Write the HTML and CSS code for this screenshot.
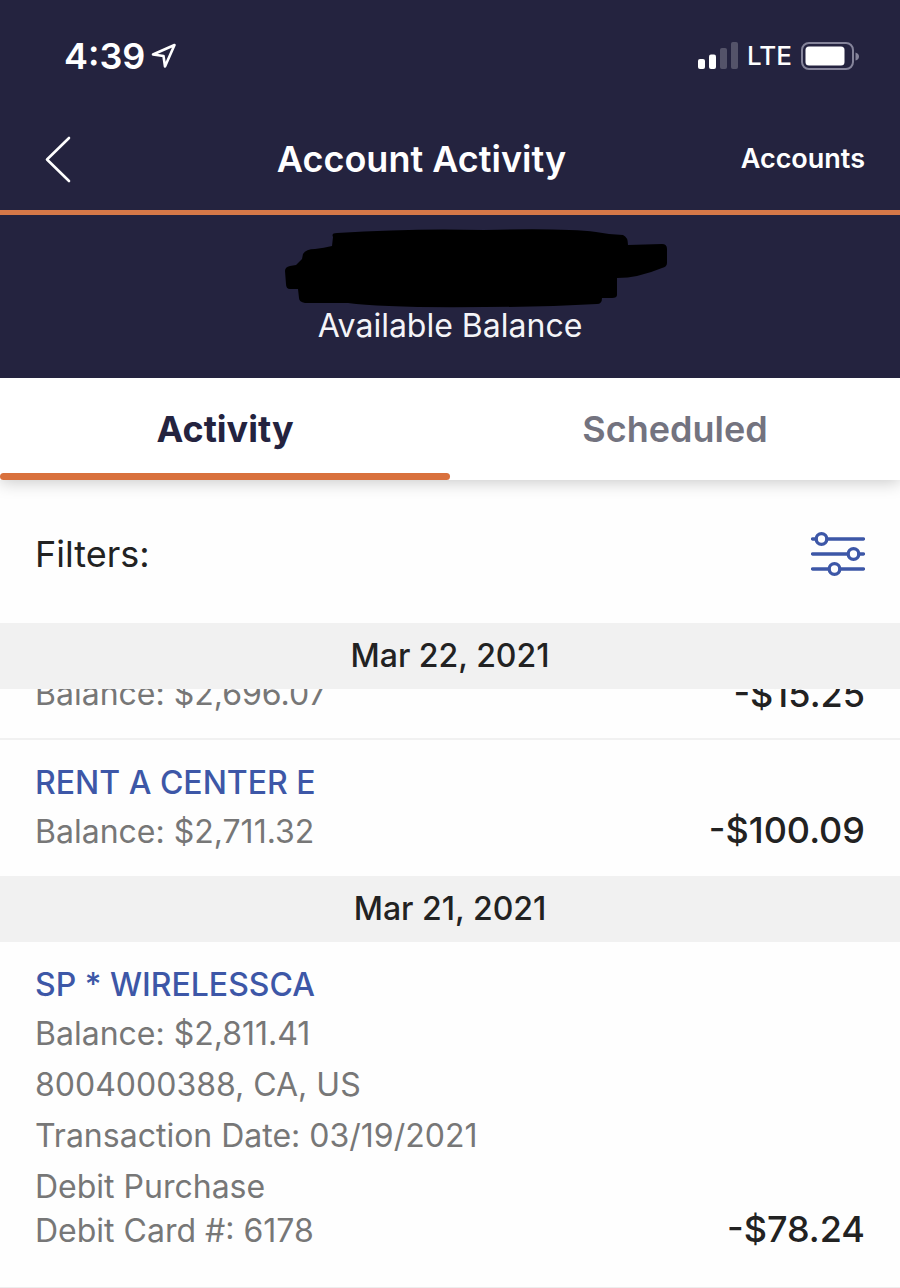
FILE: index.html
```html
<!DOCTYPE html>
<html lang="en">
<head>
<meta charset="utf-8">
<meta name="viewport" content="width=device-width, initial-scale=1">
<title>Account Activity</title>
<link rel="stylesheet" href="styles.css">
</head>
<body>
<header class="top">
  <div class="status">
    <div class="status-left">
      <span class="time">4:39</span>
      <svg width="26" height="26" viewBox="0 0 26 26" aria-hidden="true"><path d="M2 11.500 23.500 2 14 23.500 12.500 13z" fill="none" stroke="#fff" stroke-width="2.600" stroke-linejoin="round"/></svg>
    </div>
    <div class="status-right">
      <svg width="40" height="28" viewBox="0 0 40 28" aria-hidden="true"><g fill="#fff"><rect x="0" y="17" width="7" height="10" rx="2"/><rect x="11" y="12.500" width="7" height="14.500" rx="2"/><g opacity=".22"><rect x="22" y="6" width="7" height="21" rx="2"/><rect x="33" y="0" width="7" height="27" rx="2"/></g></g></svg>
      <span class="network">LTE</span>
      <svg width="58" height="28" viewBox="0 0 58 28" aria-hidden="true"><rect x="1" y="1" width="51" height="26" rx="7" fill="none" stroke="#85849a" stroke-width="2"/><rect x="4.500" y="4.500" width="39" height="19" rx="3.500" fill="#fff"/><path d="M54.500 10.500q3.500 1 3.500 4t-3.500 4z" fill="#85849a"/></svg>
    </div>
  </div>
  <nav class="nav">
    <button class="back" type="button" aria-label="Back"><svg width="28" height="48" viewBox="0 0 28 48" aria-hidden="true"><path d="M25 3 3 24.500 25 46" fill="none" stroke="#fff" stroke-width="2.600" stroke-linecap="round" stroke-linejoin="round"/></svg></button>
    <h1 class="title">Account Activity</h1>
    <a class="accounts" href="#accounts">Accounts</a>
  </nav>
</header>
<section class="summary">
  <svg class="redaction" width="384" height="80" viewBox="0 0 384 80" aria-hidden="true"><path d="M49 8 Q47 4 53 4 Q130-1 200 1 Q280-1 312 3 L325 5 L339 6 Q344 8 344 16 L378 15 Q383 15 383 20 L383 34 Q383 38 378 39 Q354 49 333 49 L333 66 Q333 69 328 69 L318 69 Q318 75 313 75 Q260 78 200 78 Q100 79 64 74 L21 74 Q15 73 15 69 L14 60 L6 60 Q2 60 2 55 L1 42 Q1 38 6 37 L12 36 L18 30 L19 25 Q22 20 31 20 Q40 19 48 17Z" fill="#000"/></svg>
  <p class="summary-label">Available Balance</p>
</section>
<div class="tabs" role="tablist">
  <button class="tab tab-active" type="button" role="tab" aria-selected="true">Activity</button>
  <button class="tab" type="button" role="tab" aria-selected="false">Scheduled</button>
</div>
<main>
  <div class="filters">
    <span class="filters-label">Filters:</span>
    <button class="filter-button" type="button" aria-label="Edit filters"><svg width="54" height="44" viewBox="0 0 54 44" aria-hidden="true"><g fill="none" stroke="#3d57a7" stroke-width="3.300" stroke-linecap="round"><path d="M1.500 7H5M16.500 7h36M1.500 22h35M48 22h4.500M1.500 37h16M29.500 37h23"/><circle cx="10.500" cy="7" r="5.300"/><circle cx="42.500" cy="22" r="5.300"/><circle cx="23.500" cy="37" r="5.300"/></g></svg></button>
  </div>
  <h2 class="date">Mar 22, 2021</h2>
  <article class="entry entry-clipped">
    <div class="details"><p>Balance: $2,696.07</p></div>
    <p class="amount">-$15.25</p>
  </article>
  <article class="entry">
    <div class="details">
      <a class="payee" href="#rent">RENT A CENTER E</a>
      <p>Balance: $2,711.32</p>
    </div>
    <p class="amount">-$100.09</p>
  </article>
  <h2 class="date">Mar 21, 2021</h2>
  <article class="entry entry-expanded">
    <div class="details">
      <a class="payee" href="#wireless">SP * WIRELESSCA</a>
      <p>Balance: $2,811.41</p>
      <p>8004000388, CA, US</p>
      <p>Transaction Date: 03/19/2021</p>
      <p>Debit Purchase<br>Debit Card #: 6178</p>
    </div>
    <p class="amount">-$78.24</p>
  </article>
</main>
</body>
</html>
```
FILE: styles.css
```css
* {
  box-sizing: border-box;
}

body {
  margin: 0;
  background: #fefefe;
  color: #222;
  font-family: Inter, "Liberation Sans", sans-serif;
  font-size: 32px;
  line-height: 44px;
}

h1, h2, p {
  margin: 0;
}

button {
  padding: 0;
  border: 0;
  background: none;
  color: inherit;
  font: inherit;
}

a {
  color: inherit;
  text-decoration: none;
}

svg {
  display: block;
}

.top {
  border-bottom: 5px solid #d67848;
  background: #24233f;
  color: #fff;
}

.status {
  display: flex;
  align-items: center;
  justify-content: space-between;
  padding: 34px 41px 0 64px;
}

.status-left {
  display: flex;
  align-items: center;
  gap: 6px;
}

.status-right {
  display: flex;
  align-items: center;
  gap: 9px;
}

.time {
  font-size: 36px;
  font-weight: 600;
}

.network {
  font-size: 26px;
  font-weight: 500;
}

.nav {
  display: grid;
  grid-template-columns: 1fr auto 1fr;
  align-items: center;
  padding: 57px 35px 27px 44px;
}

.back {
  justify-self: start;
}

.title {
  margin-right: 66px;
  font-size: 36px;
  font-weight: 600;
}

.accounts {
  justify-self: end;
  font-size: 27px;
  font-weight: 600;
}

.summary {
  display: flex;
  flex-direction: column;
  align-items: center;
  padding: 14px 0 35px;
  background: #24233f;
  color: #f4f4f8;
}

.redaction {
  margin-left: 52px;
}

.summary-label {
  line-height: 34px;
}

.tabs {
  display: grid;
  grid-template-columns: 1fr 1fr;
  background: #fff;
  box-shadow: 0 2px 16px rgb(0 0 0 / 22%);
  clip-path: inset(0 0 -32px);
}

.tab {
  position: relative;
  padding: 29px 0;
  color: #73737f;
  font-size: 36px;
  font-weight: 600;
}

.tab-active {
  color: #24233f;
  font-weight: 700;
}

.tab-active::after {
  content: "";
  position: absolute;
  right: 0;
  bottom: 0;
  left: 0;
  height: 7px;
  border-radius: 4px;
  background: #d9713d;
}

.filters {
  display: flex;
  align-items: center;
  justify-content: space-between;
  padding: 52px 35px 47px;
}

.filters-label {
  font-size: 36px;
}

.date {
  padding: 11px 0;
  background: #f1f1f1;
  font-size: 32px;
  font-weight: 500;
  text-align: center;
}

.entry {
  display: flex;
  align-items: last baseline;
  justify-content: space-between;
  padding: 21px 35px 22px;
}

.entry-clipped {
  align-items: flex-end;
  height: 51px;
  padding-top: 0;
  border-bottom: 2px solid #f1f1f1;
  overflow: hidden;
}

.entry-expanded {
  padding-bottom: 34px;
  border-bottom: 2px solid #ededed;
}

.details {
  display: flex;
  flex-direction: column;
  gap: 7px;
  color: #777;
}

.payee {
  margin-bottom: -2px;
  color: #3d57a7;
  font-weight: 500;
}

.amount {
  font-size: 36px;
  font-weight: 500;
}
```
